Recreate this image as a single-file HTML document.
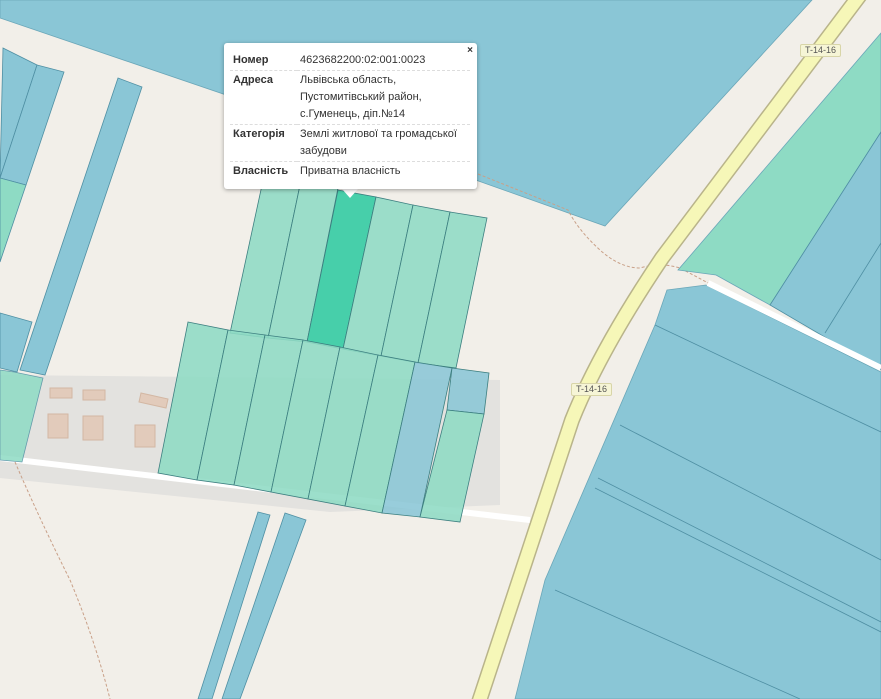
<!DOCTYPE html>
<html><head><meta charset="utf-8"><style>
html,body{margin:0;padding:0;width:881px;height:699px;overflow:hidden;background:#f2efe9;font-family:"Liberation Sans",sans-serif}
#map{position:absolute;left:0;top:0}
.pop{position:absolute;left:224px;top:43px;width:253px;height:146px;background:#fff;border-radius:3px;box-shadow:0 1px 4px rgba(0,0,0,.35);font-size:11px;color:#333}
.tip{position:absolute;left:342px;top:189px;width:0;height:0;border-left:8px solid transparent;border-right:8px solid transparent;border-top:9px solid #fff}
.x{position:absolute;right:4px;top:2px;font-size:10px;font-weight:bold;color:#333}
table{position:absolute;left:6px;top:8px;border-collapse:collapse;width:240px}
td{vertical-align:top;padding:1px 3px 1px 3px;line-height:17px}
td.l{font-weight:bold;width:61px}
tr+tr td{border-top:1px dashed #ddd}
.lbl{position:absolute;font-size:9px;color:#555;background:#f6f5d6;border:1px solid #d8d5a8;border-radius:2px;padding:0 4px;line-height:11px}
</style></head><body>
<svg id="map" width="881" height="699" viewBox="0 0 881 699">
<polygon points="30,0 812,0 605,226 470,178 0,18 0,0" fill="#8ac6d6" stroke="#6aa6b8" stroke-width="0.8"/>
<path d="M478,174 L568,210 Q578,230 600,250 Q620,268 640,268 Q660,262 680,268 L712,285" fill="none" stroke="#c9a088" stroke-width="1" stroke-dasharray="3,2"/>
<polygon points="881,33 678,270 716,275 770,305 881,132" fill="#8edbc4" stroke="#6aa6b8" stroke-width="0.8"/>
<polygon points="881,132 770,305 881,370" fill="#8ac6d6" stroke="#4f8fa3" stroke-width="0.8"/>
<line x1="881" y1="243" x2="825" y2="333" stroke="#4f8fa3" stroke-width="0.8"/>
<polygon points="667,290 706,285 881,372 881,699 515,699 545,580 655,325" fill="#8ac6d6" stroke="#6aa6b8" stroke-width="0.8"/>
<line x1="655" y1="325" x2="881" y2="432" stroke="#4f8fa3" stroke-width="0.8"/>
<line x1="620" y1="425" x2="881" y2="560" stroke="#4f8fa3" stroke-width="0.8"/>
<line x1="598" y1="478" x2="881" y2="622" stroke="#4f8fa3" stroke-width="0.8"/>
<line x1="595" y1="488" x2="881" y2="632" stroke="#4f8fa3" stroke-width="0.8"/>
<line x1="555" y1="590" x2="800" y2="699" stroke="#4f8fa3" stroke-width="0.8"/>
<path d="M708,283 L881,368" stroke="#fff" stroke-width="6" fill="none"/>
<path d="M860,-5 L662,258 Q600,350 572,420 L478,705" stroke="#b9b48a" stroke-width="16" fill="none"/>
<path d="M860,-5 L662,258 Q600,350 572,420 L478,705" stroke="#f6f7b8" stroke-width="13" fill="none"/>
<polygon points="3,48 37,65 0,178" fill="#8ac6d6" stroke="#4f8fa3" stroke-width="0.8"/>
<polygon points="37,65 64,72 26,185 0,178" fill="#8ac6d6" stroke="#4f8fa3" stroke-width="0.8"/>
<polygon points="0,178 26,185 0,262" fill="#8edbc4" stroke="#4f8fa3" stroke-width="0.8"/>
<polygon points="118,78 142,87 45,375 20,370" fill="#8ac6d6" stroke="#4f8fa3" stroke-width="0.8"/>
<polygon points="0,313 32,322 17,372 0,368" fill="#8ac6d6" stroke="#4f8fa3" stroke-width="0.8"/>
<polygon points="0,375 500,380 500,505 330,512 0,478" fill="#d8d8d8" opacity="0.6"/>
<rect x="50" y="388" width="22" height="10" fill="#e2cbbb" stroke="#d3b7a3"/>
<rect x="83" y="390" width="22" height="10" fill="#e2cbbb" stroke="#d3b7a3"/>
<rect x="48" y="414" width="20" height="24" fill="#e2cbbb" stroke="#d3b7a3"/>
<rect x="83" y="416" width="20" height="24" fill="#e2cbbb" stroke="#d3b7a3"/>
<polygon points="141,393 168,399 166,408 139,402" fill="#e2cbbb" stroke="#d3b7a3"/>
<rect x="135" y="425" width="20" height="22" fill="#e2cbbb" stroke="#d3b7a3"/>
<path d="M0,458 L530,520" stroke="#fff" stroke-width="6" fill="none"/>
<polygon points="14,372 43,378 22,462 0,460 0,370" fill="#8edbc4" stroke="#4f8fa3" stroke-width="0.8" opacity="0.85"/>
<path d="M15,462 Q40,520 70,580 Q95,640 110,699" fill="none" stroke="#c9a088" stroke-width="1" stroke-dasharray="3,2"/>
<g stroke="#3d7f80" stroke-width="0.8" fill="#8edbc4" fill-opacity="0.88">
<polygon points="262,185 300,185 268,338 230,333"/>
<polygon points="300,185 338,188 307,342 268,338"/>
<polygon points="338,190 376,197 343,349 307,342" fill="#47cfaa" fill-opacity="1"/>
<polygon points="376,197 413,205 381,356 343,349"/>
<polygon points="413,205 450,212 418,363 381,356"/>
<polygon points="450,212 487,218 456,368 418,363"/>
<polygon points="188,322 228,330 197,480 158,473"/>
<polygon points="228,330 265,335 234,485 197,480"/>
<polygon points="265,335 303,340 271,492 234,485"/>
<polygon points="303,340 340,347 308,499 271,492"/>
<polygon points="340,347 378,355 345,506 308,499"/>
<polygon points="378,355 415,362 382,513 345,506"/>
<polygon points="415,362 452,368 420,517 382,513" fill="#8ac6d6"/>
<polygon points="452,368 489,373 484,414 447,410" fill="#8ac6d6"/>
<polygon points="447,410 484,414 460,522 420,517"/>
</g>
<polygon points="258,512 270,515 212,699 198,699" fill="#8ac6d6" stroke="#4f8fa3" stroke-width="0.8"/>
<polygon points="285,513 306,520 240,699 222,699" fill="#8ac6d6" stroke="#4f8fa3" stroke-width="0.8"/>
</svg>
<div class="lbl" style="left:800px;top:44px">T-14-16</div>
<div class="lbl" style="left:571px;top:383px">T-14-16</div>
<div class="tip"></div>
<div class="pop"><span class="x">×</span>
<table>
<tr><td class="l">Номер</td><td>4623682200:02:001:0023</td></tr>
<tr><td class="l">Адреса</td><td>Львівська область,<br>Пустомитівський район,<br>с.Гуменець, діп.№14</td></tr>
<tr><td class="l">Категорія</td><td>Землі житлової та громадської забудови</td></tr>
<tr><td class="l">Власність</td><td>Приватна власність</td></tr>
</table></div>
</body></html>
